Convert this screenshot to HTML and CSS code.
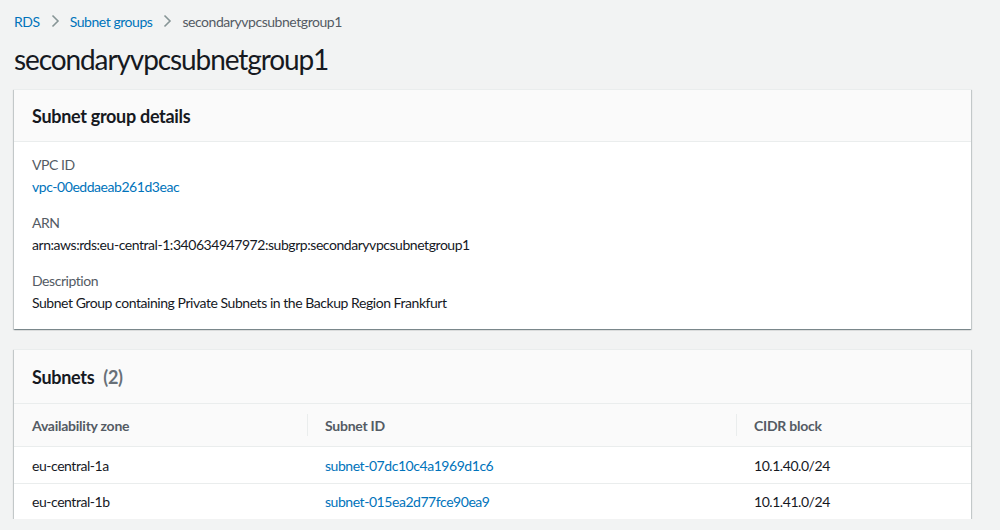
FILE: index.html
```html
<!DOCTYPE html>
<html>
<head>
<meta charset="utf-8">
<link rel="stylesheet" href="styles.css">
</head>
<body>
<div class="page">
  <nav class="crumbs">
    <a class="crumb-link" href="#">RDS</a>
    <svg class="chev" width="16" height="16" viewBox="0 0 16 16"><path d="M5.5 2.5l5.5 5.5-5.5 5.5" fill="none" stroke="#879596" stroke-width="1.6"/></svg>
    <a class="crumb-link" href="#">Subnet groups</a>
    <svg class="chev" width="16" height="16" viewBox="0 0 16 16"><path d="M5.5 2.5l5.5 5.5-5.5 5.5" fill="none" stroke="#879596" stroke-width="1.6"/></svg>
    <span class="crumb-current">secondaryvpcsubnetgroup1</span>
  </nav>
  <h1 class="title">secondaryvpcsubnetgroup1</h1>

  <section class="card">
    <div class="card-head"><h2 class="card-title">Subnet group details</h2></div>
    <div class="card-body">
      <div class="field">
        <div class="label">VPC ID</div>
        <a class="link" href="#">vpc-00eddaeab261d3eac</a>
      </div>
      <div class="field">
        <div class="label">ARN</div>
        <div class="value">arn:aws:rds:eu-central-1:340634947972:subgrp:secondaryvpcsubnetgroup1</div>
      </div>
      <div class="field">
        <div class="label">Description</div>
        <div class="value">Subnet Group containing Private Subnets in the Backup Region Frankfurt</div>
      </div>
    </div>
  </section>

  <section class="card card-table">
    <div class="card-head card-head-tall"><h2 class="card-title">Subnets <span class="count">(2)</span></h2></div>
    <div class="table">
      <div class="row head">
        <div class="cell">Availability zone</div>
        <div class="cell div">Subnet ID</div>
        <div class="cell div">CIDR block</div>
      </div>
      <div class="row">
        <div class="cell">eu-central-1a</div>
        <div class="cell"><a class="link" href="#">subnet-07dc10c4a1969d1c6</a></div>
        <div class="cell">10.1.40.0/24</div>
      </div>
      <div class="row">
        <div class="cell">eu-central-1b</div>
        <div class="cell"><a class="link" href="#">subnet-015ea2d77fce90ea9</a></div>
        <div class="cell">10.1.41.0/24</div>
      </div>
    </div>
  </section>
</div>
</body>
</html>
```

FILE: styles.css
```css
* { box-sizing: border-box; }
html, body { margin: 0; padding: 0; }
body {
  background: #f2f3f3;
  font-family: Lato, "Open Sans", sans-serif;
  font-size: 14px;
  letter-spacing: -0.45px;
  color: #16191f;
}
.page {
  width: 957px;
  margin-left: 14px;
  padding-top: 10px;
}
.crumbs {
  display: flex;
  align-items: center;
  height: 22px;
  gap: 7px;
  font-size: 14px;
}
.crumb-link { color: #0073bb; text-decoration: none; }
.crumb-current { color: #545b64; }
.chev { flex: none; }
.title {
  margin: 9px 0 0;
  font-size: 28px;
  font-weight: 400;
  line-height: 36px;
  letter-spacing: -1.1px;
  color: #16191f;
}
.card {
  background: #fff;
  margin-top: 12px;
  box-shadow: 0 1px 1px 0 rgba(0,28,36,.3), 1px 1px 1px 0 rgba(0,28,36,.15), -1px 1px 1px 0 rgba(0,28,36,.15);
  border-top: 1px solid #eaeded;
}
.card-table { margin-top: 20px; }
.card-head {
  background: #fafafa;
  height: 52px;
  border-bottom: 1px solid #eaeded;
  display: flex;
  align-items: center;
  padding: 0 18px;
}
.card-head-tall { height: 54px; }
.card-title {
  margin: 0;
  font-size: 18px;
  font-weight: 700;
  letter-spacing: -0.3px;
  color: #16191f;
}
.count { color: #687078; font-weight: 700; margin-left: 5px; }
.card-body {
  padding: 12px 18px 15px;
  display: flex;
  flex-direction: column;
  gap: 14px;
}
.field { display: flex; flex-direction: column; line-height: 22px; }
.label { color: #545b64; }
.value { color: #16191f; }
.link { color: #0073bb; text-decoration: none; }
.row {
  display: grid;
  grid-template-columns: 293px 429px 1fr;
  height: 36px;
  align-items: center;
  border-top: 1px solid #eaeded;
}
.row.head {
  background: #fafafa;
  height: 43px;
  border-top: none;
  border-bottom: 1px solid #eaeded;
  font-weight: 700;
  letter-spacing: -0.25px;
  color: #545b64;
}
.row.head + .row { border-top: none; }
.cell { padding-left: 18px; position: relative; }
.cell.div::before {
  content: "";
  position: absolute;
  left: 0;
  top: 50%;
  height: 22px;
  margin-top: -11px;
  border-left: 1px solid #eaeded;
}
```
